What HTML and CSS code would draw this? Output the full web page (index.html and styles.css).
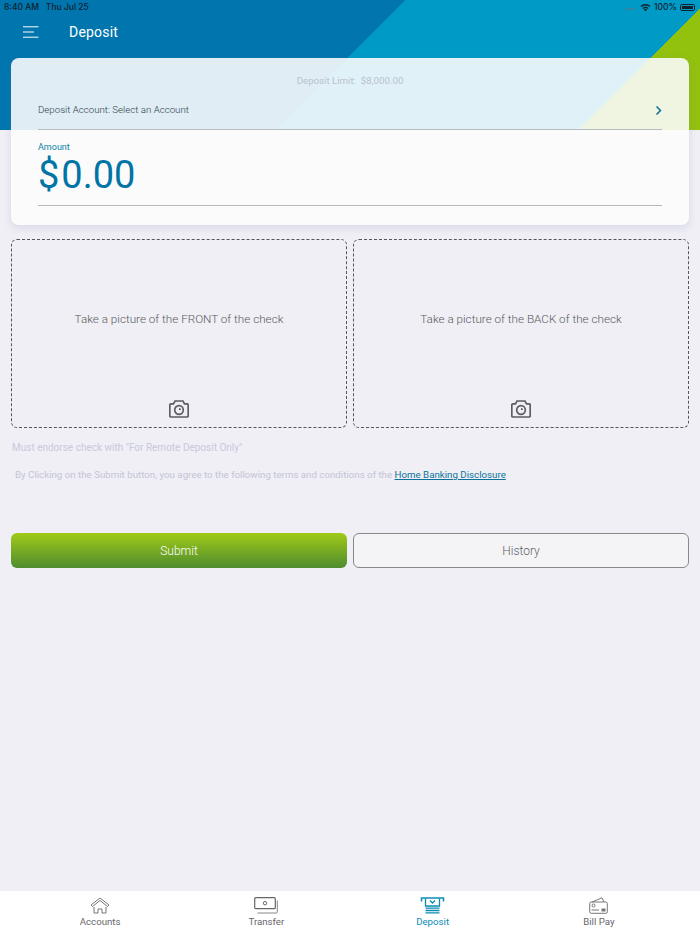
FILE: index.html
```html
<!DOCTYPE html>
<html lang="en">
<head>
    <meta charset="UTF-8">
    <meta name="viewport" content="width=device-width, initial-scale=1.0">
    <title>Deposit</title>
    <link rel="stylesheet" href="styles.css">
</head>
<body>
<div class="app">
    <header class="header">
        <div class="status-bar">
            <span class="status-time">8:40 AM&nbsp;&nbsp; Thu Jul 25</span>
            <div class="status-right">
                <span class="signal"><i></i><i></i><i></i><i></i></span>
                <svg class="wifi" width="11" height="9" viewBox="0 0 13 10">
                    <path d="M6.500 9.600 4.600 7.500a2.700 2.700 0 0 1 3.800 0z" fill="#10222e"/>
                    <path d="M2.900 5.700a5.200 5.200 0 0 1 7.200 0l-1 1.100a3.800 3.800 0 0 0-5.200 0z" fill="#10222e"/>
                    <path d="M.6 3.300a8.500 8.500 0 0 1 11.800 0l-1.100 1.200a6.900 6.900 0 0 0-9.600 0z" fill="#10222e"/>
                </svg>
                <span>100%</span>
                <span class="battery"><i></i></span>
            </div>
        </div>
        <div class="title-bar">
            <svg class="menu-icon" width="16" height="12" viewBox="0 0 16 12">
                <path d="M0 .8h15.500M0 6h11M0 11.200h15.500" stroke="#fff" stroke-width="1" fill="none"/>
            </svg>
            <h1>Deposit</h1>
        </div>
    </header>

    <main class="content">
        <section class="card">
            <div class="limit">Deposit Limit:&nbsp; $8,000.00</div>
            <div class="account-row">
                <span>Deposit Account: Select an Account</span>
                <svg class="chevron" width="8" height="11" viewBox="0 0 8 11">
                    <path d="M2.500 1.500 6.500 5.500 2.500 9.500" stroke="#0b6f93" stroke-width="1.500" fill="none"/>
                </svg>
            </div>
            <div class="amount-label">Amount</div>
            <div class="amount"><span class="currency">$</span>0.00</div>
        </section>

        <div class="captures">
            <div class="capture">
                <p>Take a picture of the FRONT of the check</p>
                <svg class="camera" width="20" height="18" viewBox="0 0 20 18">
                    <path d="M2 3.800h2.500L6 1h8l1.500 2.800H18a1.200 1.200 0 0 1 1.200 1.200v10.800a1.200 1.200 0 0 1-1.200 1.200H2a1.200 1.200 0 0 1-1.200-1.200V5A1.200 1.200 0 0 1 2 3.800z" stroke="#5c5c62" stroke-width="1.700" fill="none"/>
                    <circle cx="10" cy="10" r="4.300" stroke="#5c5c62" stroke-width="1.700" fill="none"/>
                    <path d="M10 8a2 2 0 0 1 2 2h-2z" fill="#5c5c62"/>
                </svg>
            </div>
            <div class="capture">
                <p>Take a picture of the BACK of the check</p>
                <svg class="camera" width="20" height="18" viewBox="0 0 20 18">
                    <path d="M2 3.800h2.500L6 1h8l1.500 2.800H18a1.200 1.200 0 0 1 1.200 1.200v10.800a1.200 1.200 0 0 1-1.200 1.200H2a1.200 1.200 0 0 1-1.200-1.200V5A1.200 1.200 0 0 1 2 3.800z" stroke="#5c5c62" stroke-width="1.700" fill="none"/>
                    <circle cx="10" cy="10" r="4.300" stroke="#5c5c62" stroke-width="1.700" fill="none"/>
                    <path d="M10 8a2 2 0 0 1 2 2h-2z" fill="#5c5c62"/>
                </svg>
            </div>
        </div>

        <p class="note">Must endorse check with "For Remote Deposit Only"</p>
        <p class="terms">By Clicking on the Submit button, you agree to the following terms and conditions of the <a href="#">Home Banking Disclosure</a></p>

        <div class="actions">
            <button class="btn-submit">Submit</button>
            <button class="btn-history">History</button>
        </div>
    </main>

    <nav class="tabbar">
        <a class="tab" href="#">
            <svg width="20" height="17" viewBox="0 0 20 17" fill="none" stroke="#77777c" stroke-width="1">
                <path d="M1 8 10 1l9 7-1.500 1.500L10 3.500 2.500 9.500z"/>
                <path d="M4 10v6h4v-4h4v4h4v-6"/>
            </svg>
            <span>Accounts</span>
        </a>
        <a class="tab" href="#">
            <svg width="24" height="17" viewBox="0 0 24 17" fill="none" stroke="#66666b">
                <rect x="0.700" y="0.700" width="20.600" height="11" rx="1" stroke-width="1.200"/>
                <circle cx="11" cy="6.200" r="1.700"/>
                <path d="M23.300 3.500v11.500a1 1 0 0 1-1 1H3.500" stroke-width="1" stroke="#88888c"/>
            </svg>
            <span>Transfer</span>
        </a>
        <a class="tab tab-active" href="#">
            <svg width="25" height="17" viewBox="0 0 25 17" fill="none" stroke="#0b8db3" stroke-width="1.300">
                <path d="M1.500 4.500V1h22v3.500" stroke-width="1.500"/>
                <path d="M5.500 1.500v7.500h14V1.500"/>
                <path d="M10 3.500l2.500 2.500L15 3.500"/>
                <path d="M5.500 11.200h14M5.500 13.500h14M5.500 15.800h14"/>
            </svg>
            <span>Deposit</span>
        </a>
        <a class="tab" href="#">
            <svg width="19" height="17" viewBox="0 0 19 17" fill="none" stroke="#77777c" stroke-width="1">
                <path d="M3 5 13 .8 15 5"/>
                <rect x="0.700" y="5" width="17.600" height="11.300" rx="1.500"/>
                <circle cx="4.500" cy="8.500" r="1.500"/>
                <path d="M2.500 13h7.500"/>
                <rect x="13" y="12" width="3" height="2" fill="#77777c"/>
            </svg>
            <span>Bill Pay</span>
        </a>
    </nav>
</div>
</body>
</html>
```

FILE: styles.css
```css
* {
    box-sizing: border-box;
}
body {
    margin: 0;
    font-family: Roboto, Arial, sans-serif;
    background-color: #efeff5;
}
.app {
    display: flex;
    flex-direction: column;
    height: 934px;
}
.header {
    height: 130px;
    background: linear-gradient(135deg, #0075ae 287px, #009ac6 287px, #009ac6 501px, #92c10e 501px);
}
.status-bar {
    display: flex;
    justify-content: space-between;
    align-items: center;
    height: 13px;
    padding: 1px 5px 0 4px;
    font-family: Inter, Arial, sans-serif;
    font-size: 8.500px;
    font-weight: 500;
    color: #10222e;
}
.status-right {
    display: flex;
    align-items: center;
    gap: 3px;
}
.signal {
    display: flex;
    gap: 1px;
    margin-right: 1px;
}
.signal i {
    width: 2px;
    height: 2px;
    margin-top: 4px;
    background-color: #3d7f9f;
}
.battery {
    display: block;
    width: 15px;
    height: 7px;
    padding: 1px;
    border: 1px solid #10222e;
    border-radius: 2px;
}
.battery i {
    display: block;
    height: 100%;
    background-color: #10222e;
}
.title-bar {
    display: flex;
    align-items: center;
    gap: 30px;
    height: 38px;
    padding-left: 23px;
}
.title-bar h1 {
    margin: 0;
    font-size: 14px;
    font-weight: 400;
    letter-spacing: 0.2px;
    color: #fff;
}
.menu-icon {
    display: block;
}
.content {
    flex: 1;
    padding: 0 11px;
}
.card {
    position: relative;
    height: 167px;
    margin-top: -72px;
    padding: 16px 27px 0;
    background-color: rgba(252, 252, 253, 0.89);
    border-radius: 8px;
    box-shadow: 0 3px 8px rgba(120, 115, 170, 0.18);
}
.limit {
    height: 13px;
    line-height: 13px;
    text-align: center;
    font-size: 9.700px;
    color: #b9c2d0;
}
.account-row {
    display: flex;
    justify-content: space-between;
    align-items: center;
    height: 43px;
    padding-top: 3px;
    font-size: 9.700px;
    font-weight: 300;
    color: #2c3f4a;
    border-bottom: 1px solid #b6bcc0;
}
.chevron {
    margin-top: 2px;
}
.amount-label {
    margin-top: 11px;
    height: 12px;
    line-height: 12px;
    font-size: 9px;
    color: #0b82a8;
}
.amount {
    height: 53px;
    line-height: 40px;
    font-size: 38px;
    color: #0075a5;
    border-bottom: 1px solid #b6b8ba;
    padding-top: 2px;
}
.currency {
    margin-right: 2px;
}
.captures {
    display: flex;
    gap: 6px;
    margin-top: 14px;
}
.capture {
    flex: 1;
    display: flex;
    flex-direction: column;
    align-items: center;
    height: 189px;
    padding-top: 72px;
    border: 1px dashed #55555a;
    border-radius: 6px;
}
.capture p {
    margin: 0;
    font-size: 11.700px;
    font-weight: 300;
    color: #5a5a60;
}
.camera {
    margin-top: 74px;
}
.note {
    margin: 13px 0 0 1px;
    font-size: 10px;
    line-height: 13px;
    color: #c9c9dc;
}
.terms {
    margin: 14px 0 0 4px;
    font-size: 9.730px;
    line-height: 13px;
    color: #c4c4d6;
}
.terms a {
    color: #0b7299;
}
.actions {
    display: grid;
    grid-template-columns: 1fr 1fr;
    gap: 6px;
    margin-top: 52px;
}
.actions button {
    height: 35px;
    padding: 0;
    font-family: Roboto, Arial, sans-serif;
    font-size: 12px;
    font-weight: 300;
    border-radius: 6px;
}
.btn-submit {
    color: #fff;
    background: linear-gradient(#a0ca18, #4f8c2f);
    border: none;
}
.btn-history {
    color: #5f5f65;
    background-color: #f4f4f7;
    border: 1px solid #88888e;
}
.tabbar {
    display: flex;
    height: 43px;
    padding: 6px 18px 0 17px;
    background-color: #fff;
}
.tab {
    flex: 1;
    display: flex;
    flex-direction: column;
    align-items: center;
    gap: 2px;
    font-size: 9.700px;
    line-height: 12px;
    color: #66666b;
    text-decoration: none;
}
.tab-active {
    color: #0b8db3;
}
```
